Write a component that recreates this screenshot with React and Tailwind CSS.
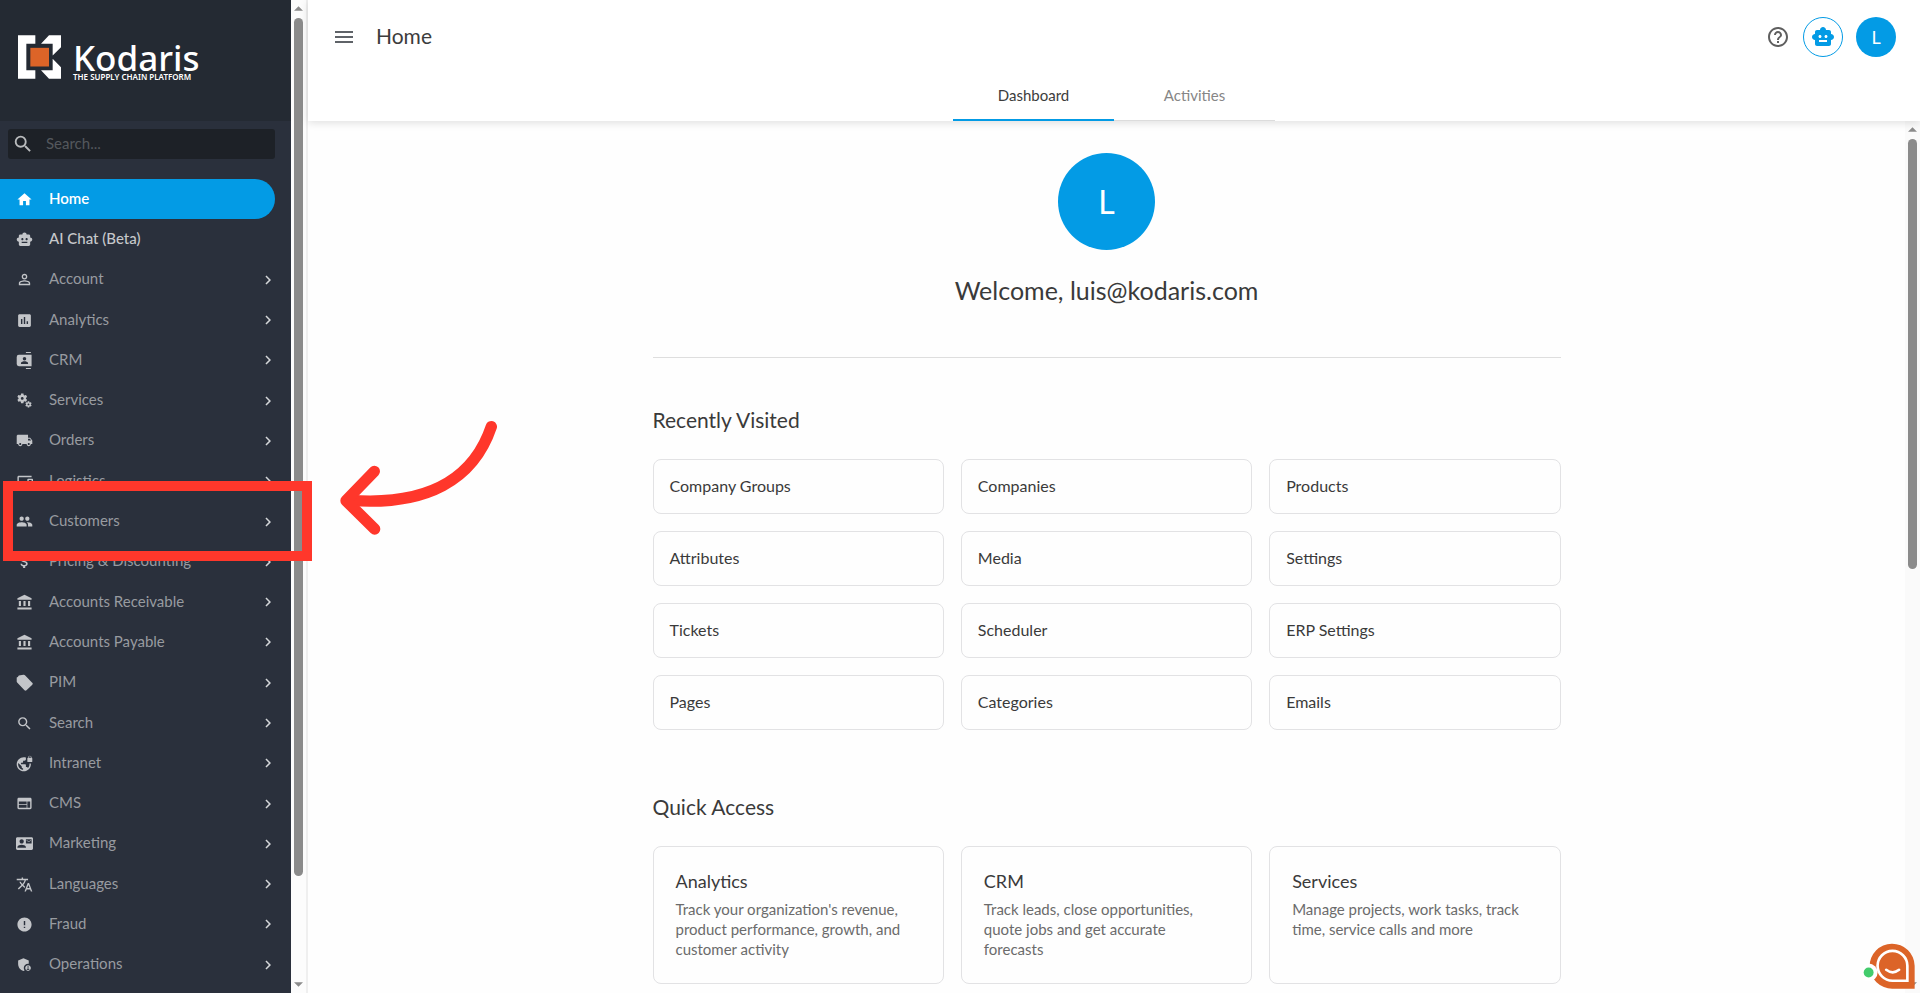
import {
  MdAccountBalance,
  MdAdminPanelSettings,
  MdAttachMoney,
  MdChevronRight,
  MdContactMail,
  MdDevices,
  MdError,
  MdHelpOutline,
  MdHome,
  MdInsertChart,
  MdLocalShipping,
  MdMenu,
  MdMiscellaneousServices,
  MdPeople,
  MdPersonOutline,
  MdSearch,
  MdSmartToy,
  MdTranslate,
  MdVpnLock,
  MdWeb,
} from 'react-icons/md'

function CrmIcon({ className }) {
  return (
    <svg viewBox="0 0 24 24" fill="currentColor" className={className} aria-hidden="true">
      <path d="M14 0h7v1.500h-7zM14 22.500h7v1.500h-7z" />
      <path
        fillRule="evenodd"
        d="M4 4h18v16H4a3 3 0 0 1-3-3V7a3 3 0 0 1 3-3zm8 3a2.500 2.500 0 1 0 0 5 2.500 2.500 0 0 0 0-5zM7 17h10v-1.500c0-1.700-3.300-2.500-5-2.500s-5 .8-5 2.500z"
      />
    </svg>
  )
}

function TagIcon({ className }) {
  return (
    <svg viewBox="0 0 24 24" fill="currentColor" className={className} aria-hidden="true">
      <path d="M22.500 12L13 2.200Q12 1 10.500 1.200L4 2Q2.500 5 1 5v5.500a2 2 0 0 0 .6 1.400L12 23a2 2 0 0 0 2.800 0L23 15a2 2 0 0 0-.5-3z" />
    </svg>
  )
}

const navItems = [
  { label: 'Home', icon: MdHome, active: true },
  { label: 'AI Chat (Beta)', icon: MdSmartToy, highlight: true },
  { label: 'Account', icon: MdPersonOutline },
  { label: 'Analytics', icon: MdInsertChart },
  { label: 'CRM', icon: CrmIcon },
  { label: 'Services', icon: MdMiscellaneousServices },
  { label: 'Orders', icon: MdLocalShipping },
  { label: 'Logistics', icon: MdDevices },
  { label: 'Customers', icon: MdPeople },
  { label: 'Pricing & Discounting', icon: MdAttachMoney },
  { label: 'Accounts Receivable', icon: MdAccountBalance },
  { label: 'Accounts Payable', icon: MdAccountBalance },
  { label: 'PIM', icon: TagIcon },
  { label: 'Search', icon: MdSearch },
  { label: 'Intranet', icon: MdVpnLock },
  { label: 'CMS', icon: MdWeb },
  { label: 'Marketing', icon: MdContactMail },
  { label: 'Languages', icon: MdTranslate },
  { label: 'Fraud', icon: MdError },
  { label: 'Operations', icon: MdAdminPanelSettings },
]

const recent = [
  'Company Groups', 'Companies', 'Products',
  'Attributes', 'Media', 'Settings',
  'Tickets', 'Scheduler', 'ERP Settings',
  'Pages', 'Categories', 'Emails',
]

const quickAccess = [
  { title: 'Analytics', text: "Track your organization's revenue, product performance, growth, and customer activity" },
  { title: 'CRM', text: 'Track leads, close opportunities, quote jobs and get accurate forecasts' },
  { title: 'Services', text: 'Manage projects, work tasks, track time, service calls and more' },
]

function Logo() {
  return (
    <div className="flex gap-3">
      <svg viewBox="54 106 129 131" className="h-11 w-[43px]" aria-hidden="true">
        <path fill="#fff" d="M54 106h52v26H79v79h27v26H54zM147 106h36v36l-25 25v-35h-35zM158 177l25 25v35h-36l-24-26h35z" />
        <path fill="#dc6428" d="M91 144h56v56H91z" />
      </svg>
      <div className="flex flex-col pt-2 font-['Noto_Sans',sans-serif] text-white">
        <span className="text-[35px] leading-[30px] font-medium">Kodaris</span>
        <span className="text-[8px] leading-2 font-semibold whitespace-nowrap">THE SUPPLY CHAIN PLATFORM</span>
      </div>
    </div>
  )
}

function NavItem({ label, icon: Icon, active, highlight }) {
  let tone = 'text-[#989ba0]'
  if (active) tone = 'bg-[#039be5] text-white font-semibold'
  if (highlight) tone = 'text-[#c6c8cb] font-medium'

  return (
    <li className="flex min-h-0 flex-1">
      <a href="#" className={`flex flex-1 items-center rounded-r-full pl-4 ${tone}`}>
        <Icon className={active ? 'size-[17px] text-white' : 'size-[17px] text-[#c3c5c9]'} />
        <span className="ml-4 flex-1 pb-[3px] text-[15px] leading-5">{label}</span>
        {!active && !highlight && <MdChevronRight className="-mr-0.5 size-[18px] text-[#d4d6d9]" />}
      </a>
    </li>
  )
}

function ScrollArrow({ down }) {
  return (
    <svg viewBox="0 0 10 5" className="h-[5px] w-[9px] shrink-0" aria-hidden="true">
      <path fill="#8b8b8b" d={down ? 'M0 0h10L5 5z' : 'M0 5h10L5 0z'} />
    </svg>
  )
}

function Sidebar() {
  return (
    <aside className="flex w-[291px] shrink-0 flex-col bg-[#2a303c]">
      <div className="flex h-[121px] shrink-0 items-start bg-[#242a33] pt-[35px] pl-[18px]">
        <Logo />
      </div>
      <label className="mt-2 mr-4 ml-2 flex h-[30px] shrink-0 items-center rounded-[3px] bg-[#1d2127] pl-1">
        <MdSearch className="size-[22px] shrink-0 text-[#b9bbbd]" />
        <input
          type="text"
          aria-label="Search"
          placeholder="Search..."
          className="ml-3 w-full bg-transparent pb-[3px] text-[15px] leading-5 outline-none placeholder:text-[#54585d]"
        />
      </label>
      <nav className="mt-5 mr-4 flex min-h-0 flex-1 flex-col">
        <ul className="flex min-h-0 flex-1 flex-col pb-2">
          {navItems.map((item) => (
            <NavItem key={item.label} {...item} />
          ))}
        </ul>
      </nav>
    </aside>
  )
}

function Header() {
  return (
    <header className="z-10 shrink-0 bg-white shadow-[0_2px_8px_rgba(0,0,0,0.12)]">
      <div className="flex h-[73px] items-center pr-6 pl-6">
        <button type="button" aria-label="Toggle menu">
          <MdMenu className="size-6 text-[#5f6368]" />
        </button>
        <h1 className="ml-5 flex-1 pb-0.5 text-[21px] leading-7 text-[#3c3c3c]">Home</h1>
        <div className="flex items-center gap-[13px]">
          <button type="button" aria-label="Help">
            <MdHelpOutline className="size-6 text-[#5f5f5f]" />
          </button>
          <button
            type="button"
            aria-label="AI assistant"
            className="flex size-10 items-center justify-center rounded-full border border-[#039be5]"
          >
            <MdSmartToy className="size-6 text-[#039be5]" />
          </button>
          <button type="button" className="size-10 rounded-full bg-[#039be5] text-lg text-white">
            L
          </button>
        </div>
      </div>
      <div className="flex h-12 justify-center text-[15px]">
        <button type="button" className="w-[161px] border-b-2 border-[#039be5] pb-0.5 text-[#3c3c3c]">
          Dashboard
        </button>
        <button type="button" className="w-[161px] border-b border-[#dcdcdc] pb-[3px] text-[#868686]">
          Activities
        </button>
      </div>
    </header>
  )
}

function Dashboard() {
  return (
    <main className="flex min-w-0 flex-1 flex-col items-center overflow-hidden px-6 pt-8 text-[#3a3a3a]">
      <div className="flex size-[97px] shrink-0 items-center justify-center rounded-full bg-[#039be5] text-[32px] text-white">
        L
      </div>
      <p className="mt-6 text-[25px] leading-8">Welcome, luis@kodaris.com</p>
      <div className="mt-[51px] w-full max-w-[908px] border-t border-[#dedede]">
        <section className="mt-[50px]">
          <h2 className="text-[21px] leading-6">Recently Visited</h2>
          <div className="mt-[27px] grid grid-cols-3 gap-[17px]">
            {recent.map((name) => (
              <a
                key={name}
                href="#"
                className="flex h-[55px] items-center rounded-lg border border-[#e2e2e4] px-4 pb-0.5 text-base"
              >
                {name}
              </a>
            ))}
          </div>
        </section>
        <section className="mt-[65px]">
          <h2 className="text-[21px] leading-6">Quick Access</h2>
          <div className="mt-[27px] grid grid-cols-3 gap-[17px]">
            {quickAccess.map(({ title, text }) => (
              <a key={title} href="#" className="rounded-lg border border-[#e2e2e4] px-[22px] py-6">
                <h3 className="text-lg leading-5">{title}</h3>
                <p className="mt-2 pr-4 text-[15px] leading-5 text-[#6b6b6b]">{text}</p>
              </a>
            ))}
          </div>
        </section>
      </div>
    </main>
  )
}

function ChatLauncher() {
  return (
    <button type="button" aria-label="Open chat" className="absolute right-[5px] bottom-1 z-20">
      <svg viewBox="189 128 157 139" className="h-[46px] w-[52px]">
        <path fill="#dc6428" d="M345 266V197A68 68 0 1 0 278 266z" />
        <path fill="none" stroke="#fff" strokeWidth="8" d="M323 242V197A45 45 0 1 0 278 242z" />
        <path fill="none" stroke="#fff" strokeWidth="8" strokeLinecap="round" d="M259 209q20 15 39 0" />
        <circle cx="206" cy="217" r="27" fill="#fff" />
        <circle cx="206" cy="217" r="15" fill="#43cc6c" />
      </svg>
    </button>
  )
}

export default function App() {
  return (
    <div className="relative flex h-screen overflow-hidden bg-[#fefefe] font-[Lato,sans-serif]">
      <Sidebar />

      {/* Sidebar scrollbar */}
      <div className="flex w-[17px] shrink-0 flex-col items-center border-r-2 border-[#efefef] bg-[#fcfcfc] py-1.5">
        <ScrollArrow />
        <div className="mt-[7px] flex w-[9px] flex-1 flex-col">
          <div className="h-[89%] rounded-full bg-[#8b8b8b]" />
        </div>
        <ScrollArrow down />
      </div>

      <div className="flex min-w-0 flex-1 flex-col">
        <Header />
        <div className="flex min-h-0 flex-1">
          <Dashboard />
          <div className="flex w-[15px] shrink-0 flex-col items-center bg-[#fafafa] py-1.5">
            <ScrollArrow />
            <div className="mt-[7px] flex w-[9px] flex-1 flex-col">
              <div className="h-[51%] rounded-full bg-[#8b8b8b]" />
            </div>
            <ScrollArrow down />
          </div>
        </div>
      </div>

      {/* Callout around the Customers entry */}
      <div className="pointer-events-none absolute top-[481px] left-[3px] z-30 h-20 w-[309px] border-10 border-[#ff372b]" />
      <svg
        viewBox="0 0 570 450"
        className="pointer-events-none absolute top-[400px] left-[330px] z-30 h-[150px] w-[190px]"
        aria-hidden="true"
      >
        <g fill="none" stroke="#ff372b" strokeWidth="34" strokeLinecap="round" strokeLinejoin="round">
          <path d="M484 80C430 240 290 318 60 301" />
          <path d="M133 214L48 302L134 387" />
        </g>
      </svg>

      <ChatLauncher />
    </div>
  )
}
